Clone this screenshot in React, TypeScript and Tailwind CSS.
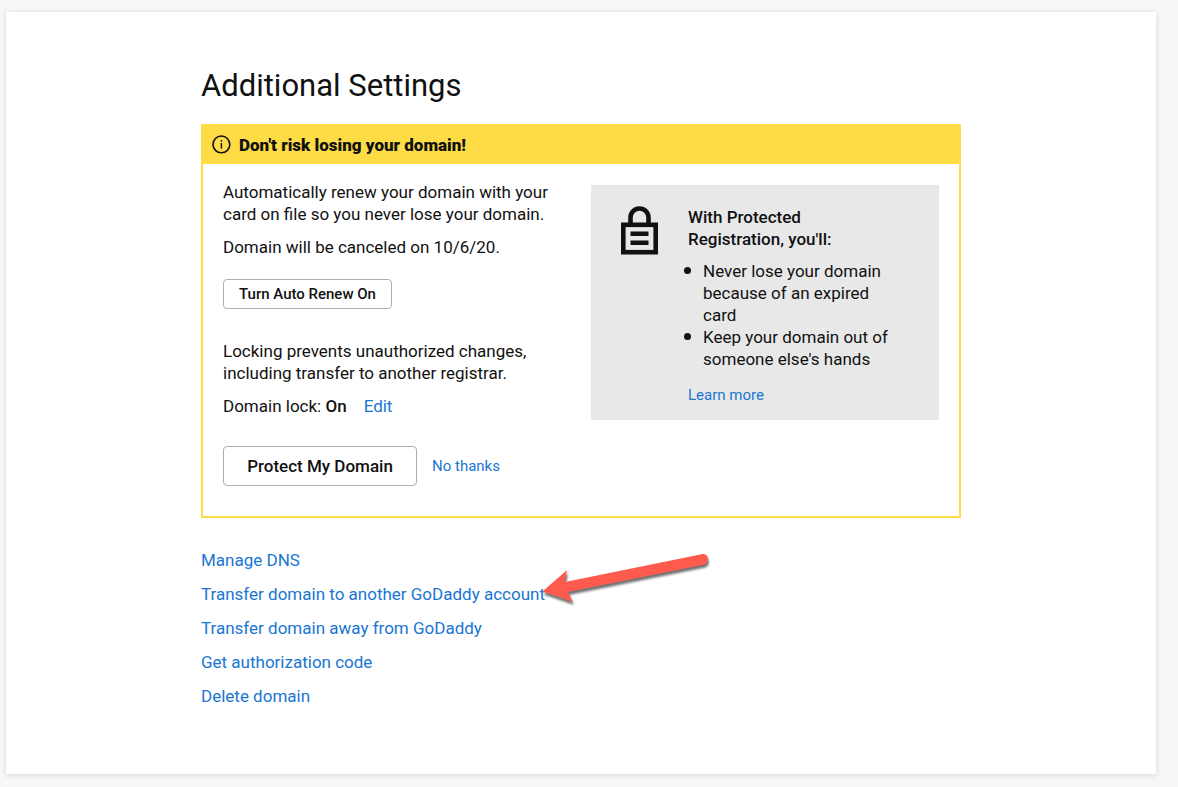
import React from 'react';

type SettingsLink = {
  label: string;
  highlighted?: boolean;
};

const settingsLinks: SettingsLink[] = [
  { label: 'Manage DNS' },
  { label: 'Transfer domain to another GoDaddy account', highlighted: true },
  { label: 'Transfer domain away from GoDaddy' },
  { label: 'Get authorization code' },
  { label: 'Delete domain' },
];

const InfoIcon = () => (
  <svg width="20" height="20" viewBox="0 0 20 20" fill="none" aria-hidden="true">
    <circle cx="10.4" cy="9.4" r="8.4" stroke="#111" strokeWidth="1.6" />
    <path d="M10.4 8V13.6" stroke="#111" strokeWidth="1.4" />
    <circle cx="10.4" cy="5.8" r="0.9" fill="#111" />
  </svg>
);

const LockIcon = () => (
  <svg width="37" height="49" viewBox="0 0 37 49" fill="none" aria-hidden="true" className="shrink-0">
    <path d="M9.5 18V11.5a9 9 0 0 1 18 0V18" stroke="#111" strokeWidth="4.6" />
    <rect x="2.3" y="18.8" width="32.4" height="27.4" stroke="#111" strokeWidth="4.6" />
    <path d="M9.5 27.8h18M9.5 36.8h18" stroke="#111" strokeWidth="4.4" />
  </svg>
);

// Points at the highlighted link
const Arrow = () => (
  <svg
    width="180"
    height="64"
    viewBox="0 0 180 64"
    aria-hidden="true"
    className="pointer-events-none absolute -top-[35px] left-[337px] drop-shadow-[1px_3px_1px_rgba(0,0,0,0.55)]"
  >
    <path
      d="M4.5 43.5L29 22L27 34L163.5 6.2Q168.5 5.2 169.8 9.8Q170.6 15.4 165.5 16.8L30 44L35 54Z"
      fill="#fe5b4e"
    />
  </svg>
);

const Bullet = () => <span className="mt-[7px] size-[7px] shrink-0 rounded-full bg-[#111]" />;

const AutoRenewPanel = () => (
  <div className="pt-[17px]">
    <p>
      Automatically renew your domain with your
      <br />
      card on file so you never lose your domain.
    </p>
    <p className="mt-[11px]">Domain will be canceled on 10/6/20.</p>
    <button
      type="button"
      className="mt-[21px] h-[30px] w-[169px] cursor-pointer rounded-[4px] border border-[#aab0b8] bg-white text-[15px] font-medium whitespace-nowrap"
    >
      Turn Auto Renew On
    </button>

    <p className="mt-[31px]">
      Locking prevents unauthorized changes,
      <br />
      including transfer to another registrar.
    </p>
    <p className="mt-[11px] flex">
      <span>
        Domain lock: <strong className="font-medium">On</strong>
      </span>
      <a href="#edit" className="ml-[17px] text-[#1976d2] hover:underline">
        Edit
      </a>
    </p>

    <div className="mt-[29px] flex items-center gap-[15px]">
      <button
        type="button"
        className="h-10 w-[194px] cursor-pointer rounded-[4px] border border-[#aab0b8] bg-white font-medium whitespace-nowrap"
      >
        Protect My Domain
      </button>
      <a href="#dismiss" className="text-[15px] text-[#1976d2] hover:underline">
        No thanks
      </a>
    </div>
  </div>
);

const ProtectionCard = () => (
  <div className="pt-[21px]">
    <aside className="flex gap-[30px] bg-[#e8e8e8] pt-[21px] pr-10 pb-[14px] pl-[30px]">
      <LockIcon />
      <div>
        <h2 className="font-medium">
          With Protected
          <br />
          Registration, you'll:
        </h2>
        <ul className="mt-[10px] -ml-1">
          <li className="flex gap-3">
            <Bullet />
            <span>
              Never lose your domain
              <br />
              because of an expired
              <br />
              card
            </span>
          </li>
          <li className="flex gap-3">
            <Bullet />
            <span>
              Keep your domain out of
              <br />
              someone else's hands
            </span>
          </li>
        </ul>
        <a href="#learn" className="mt-[14px] inline-block text-[15px] text-[#1976d2] hover:underline">
          Learn more
        </a>
      </div>
    </aside>
  </div>
);

export default function App() {
  return (
    <div className="min-h-screen bg-[#f5f7f9] pt-3 pr-[22px] pb-[13px] pl-[6px] font-['Roboto',sans-serif] text-[17px] leading-[22px] text-[#111]">
      <main className="bg-white px-6 pt-[54px] pb-[67px] shadow-[0_1px_6px_rgba(0,0,0,0.14)]">
        <div className="mx-auto max-w-[760px]">
          <h1 className="text-[31px] leading-10">Additional Settings</h1>

          <section className="mt-[18px] border-2 border-[#fedc45]">
            <div className="flex h-[38px] items-center gap-2 bg-[#fedc45] pl-2">
              <InfoIcon />
              <span className="font-black">Don't risk losing your domain!</span>
            </div>
            <div className="grid gap-5 px-5 pb-[30px] md:grid-cols-2">
              <AutoRenewPanel />
              <ProtectionCard />
            </div>
          </section>

          <ul className="mt-[31px] flex flex-col gap-3">
            {settingsLinks.map((link) => (
              <li key={link.label} className="relative">
                <a href="#settings" className="text-[#1976d2] hover:underline">
                  {link.label}
                </a>
                {link.highlighted && <Arrow />}
              </li>
            ))}
          </ul>
        </div>
      </main>
    </div>
  );
}
